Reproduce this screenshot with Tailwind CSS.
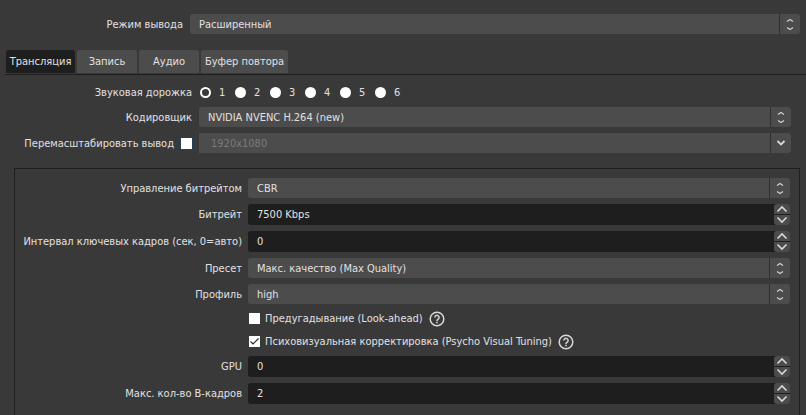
<!DOCTYPE html>
<html lang="ru">
<head>
<meta charset="utf-8">
<title>Настройки вывода</title>
<script src="https://cdn.jsdelivr.net/npm/@tailwindcss/browser@4"></script>
</head>
<body class="min-h-screen overflow-hidden bg-[#3a393a] font-['DejaVu_Sans_Condensed','DejaVu_Sans',sans-serif] text-[11px] leading-4 text-[#e1e0e1]">
<svg class="hidden" aria-hidden="true">
  <symbol id="pair" viewBox="0 0 20 20"><path d="M7 7.500 10 5.500 13 7.500M7 13.500 10 15.500 13 13.500" fill="none" stroke="#d0d0d0" stroke-width="1.200"/></symbol>
  <symbol id="down" viewBox="0 0 20 20"><path d="M6.500 8 10 11.500 13.500 8" fill="none" stroke="#d8d8d8" stroke-width="1.800"/></symbol>
  <symbol id="spin-up" viewBox="0 0 16 10"><path d="M3.500 7.500 8 3 12.500 7.500" fill="none" stroke="#d8d8d8" stroke-width="1.600"/></symbol>
  <symbol id="spin-down" viewBox="0 0 16 10"><path d="M3.500 2.500 8 7 12.500 2.500" fill="none" stroke="#d8d8d8" stroke-width="1.600"/></symbol>
  <symbol id="help" viewBox="0 0 16 16"><circle cx="8" cy="8" r="6.800" fill="none" stroke="#d8d8d8" stroke-width="1.500"/><path d="M5.900 6.500a2.100 2.100 0 1 1 3.300 1.700Q8 8.900 8 9.900" fill="none" stroke="#d8d8d8" stroke-width="1.500"/><path d="M7.200 10.800h1.600v1.500H7.200z" fill="#d8d8d8"/></symbol>
</svg>
<main class="pt-[14px]">
  <div class="grid grid-cols-[183px_1fr] items-center gap-x-[7px] pr-[6px]">
    <label for="mode" class="pt-px text-right">Режим вывода</label>
    <div class="relative">
      <select id="mode" class="block h-5 w-full appearance-none rounded-[3px] bg-[#4c4c4c] pt-px pl-[9px]"><option>Расширенный</option></select>
      <svg class="pointer-events-none absolute top-0 right-0 h-5 w-[21px] border-l border-[#2f2f2f]"><use href="#pair"/></svg>
    </div>
  </div>

  <nav class="mt-4 ml-[5px] flex gap-[2px] border-b border-[#1f1e1f] pb-px pl-px" role="tablist">
    <button role="tab" aria-selected="true" class="h-[23px] w-[69px] rounded-t-[3px] bg-[#1f1e1f] pt-px whitespace-nowrap">Трансляция</button>
    <button role="tab" class="h-[23px] w-[60px] rounded-t-[3px] bg-[#4c4c4c] pt-px">Запись</button>
    <button role="tab" class="h-[23px] w-[60px] rounded-t-[3px] bg-[#4c4c4c] pt-px">Аудио</button>
    <button role="tab" class="h-[23px] w-[87px] rounded-t-[3px] bg-[#4c4c4c] pt-px whitespace-nowrap">Буфер повтора</button>
  </nav>

  <div class="mt-[9px] grid grid-cols-[192px_1fr] items-center gap-x-[7px] gap-y-[6px] pr-[15px]">
    <span id="track" class="pt-px text-right">Звуковая дорожка</span>
    <div class="flex pl-px" role="radiogroup" aria-labelledby="track">
      <label class="flex w-[35px] items-center gap-2"><input type="radio" name="track" checked class="size-[11px] appearance-none rounded-full bg-white checked:border-2 checked:border-white checked:bg-[#3a393a]"><span class="pt-px">1</span></label>
      <label class="flex w-[35px] items-center gap-2"><input type="radio" name="track" class="size-[11px] appearance-none rounded-full bg-white checked:border-2 checked:border-white checked:bg-[#3a393a]"><span class="pt-px">2</span></label>
      <label class="flex w-[35px] items-center gap-2"><input type="radio" name="track" class="size-[11px] appearance-none rounded-full bg-white checked:border-2 checked:border-white checked:bg-[#3a393a]"><span class="pt-px">3</span></label>
      <label class="flex w-[35px] items-center gap-2"><input type="radio" name="track" class="size-[11px] appearance-none rounded-full bg-white checked:border-2 checked:border-white checked:bg-[#3a393a]"><span class="pt-px">4</span></label>
      <label class="flex w-[35px] items-center gap-2"><input type="radio" name="track" class="size-[11px] appearance-none rounded-full bg-white checked:border-2 checked:border-white checked:bg-[#3a393a]"><span class="pt-px">5</span></label>
      <label class="flex w-[35px] items-center gap-2"><input type="radio" name="track" class="size-[11px] appearance-none rounded-full bg-white checked:border-2 checked:border-white checked:bg-[#3a393a]"><span class="pt-px">6</span></label>
    </div>

    <label for="encoder" class="pt-px text-right">Кодировщик</label>
    <div class="relative">
      <select id="encoder" class="block h-5 w-full appearance-none rounded-[3px] bg-[#4c4c4c] pt-px pl-[9px]"><option>NVIDIA NVENC H.264 (new)</option></select>
      <svg class="pointer-events-none absolute top-0 right-0 h-5 w-[21px] border-l border-[#2f2f2f]"><use href="#pair"/></svg>
    </div>

    <label class="flex items-center justify-end gap-[7px] whitespace-nowrap"><span class="pt-px">Перемасштабировать вывод</span><input type="checkbox" class="size-[11px] appearance-none bg-white outline outline-[#24415c]"></label>
    <div class="relative">
      <input type="text" aria-label="Разрешение" value="1920x1080" disabled class="block h-5 w-full rounded-r-[3px] bg-[#4c4c4c] pt-px pl-3 text-[#7b7a7b]">
      <svg class="pointer-events-none absolute top-0 right-0 h-5 w-[21px] border-l border-[#2f2f2f]"><use href="#down"/></svg>
    </div>
  </div>

  <section class="mt-[15px] mr-[6px] ml-[14px] border border-b-0 border-[#1f1e1f] pt-[9px] pr-[9px] pb-4">
    <div class="grid grid-cols-[227px_1fr] items-center gap-x-[6px] gap-y-[6px]">
      <label for="rate" class="pt-px text-right">Управление битрейтом</label>
      <div class="relative">
        <select id="rate" class="block h-5 w-full appearance-none rounded-[3px] bg-[#4c4c4c] pt-px pl-[9px]"><option>CBR</option></select>
        <svg class="pointer-events-none absolute top-0 right-0 h-5 w-[21px] border-l border-[#2f2f2f]"><use href="#pair"/></svg>
      </div>

      <label for="bitrate" class="pt-px text-right">Битрейт</label>
      <div class="flex h-[21px] rounded-[3px] bg-[#1f1e1f]">
        <input id="bitrate" type="text" value="7500 Kbps" class="min-w-0 flex-1 pt-px pl-[9px]">
        <div class="flex w-4 flex-col gap-px">
          <button aria-label="Больше" class="h-[10px] rounded-t-[3px] bg-[#4c4c4c]"><svg class="block h-[10px] w-4"><use href="#spin-up"/></svg></button>
          <button aria-label="Меньше" class="h-[10px] rounded-b-[3px] bg-[#4c4c4c]"><svg class="block h-[10px] w-4"><use href="#spin-down"/></svg></button>
        </div>
      </div>

      <label for="keyint" class="pt-px text-right whitespace-nowrap">Интервал ключевых кадров (сек, 0=авто)</label>
      <div class="flex h-[21px] rounded-[3px] bg-[#1f1e1f]">
        <input id="keyint" type="text" value="0" class="min-w-0 flex-1 pt-px pl-[9px]">
        <div class="flex w-4 flex-col gap-px">
          <button aria-label="Больше" class="h-[10px] rounded-t-[3px] bg-[#4c4c4c]"><svg class="block h-[10px] w-4"><use href="#spin-up"/></svg></button>
          <button aria-label="Меньше" class="h-[10px] rounded-b-[3px] bg-[#4c4c4c]"><svg class="block h-[10px] w-4"><use href="#spin-down"/></svg></button>
        </div>
      </div>

      <label for="preset" class="pt-px text-right">Пресет</label>
      <div class="relative">
        <select id="preset" class="block h-5 w-full appearance-none rounded-[3px] bg-[#4c4c4c] pt-px pl-[9px]"><option>Макс. качество (Max Quality)</option></select>
        <svg class="pointer-events-none absolute top-0 right-0 h-5 w-[21px] border-l border-[#2f2f2f]"><use href="#pair"/></svg>
      </div>

      <label for="profile" class="pt-px text-right">Профиль</label>
      <div class="relative">
        <select id="profile" class="block h-5 w-full appearance-none rounded-[3px] bg-[#4c4c4c] pt-px pl-[9px]"><option>high</option></select>
        <svg class="pointer-events-none absolute top-0 right-0 h-5 w-[21px] border-l border-[#2f2f2f]"><use href="#pair"/></svg>
      </div>

      <div class="col-start-2 flex h-[17px] items-center gap-[6px] pl-px">
        <label class="flex items-center gap-[5px]"><input type="checkbox" class="size-[11px] appearance-none bg-white"><span class="pt-px">Предугадывание (Look-ahead)</span></label>
        <svg class="size-4" role="img" aria-label="Справка"><use href="#help"/></svg>
      </div>
      <div class="col-start-2 flex h-[17px] items-center gap-[6px] pl-px">
        <label class="flex items-center gap-[5px]"><span class="relative flex"><input type="checkbox" checked class="size-[11px] appearance-none bg-white"><svg class="pointer-events-none absolute inset-0" viewBox="0 0 11 11"><path d="M1.500 5.500 4 8 9.500 2.500" fill="none" stroke="#2b2b2b" stroke-width="1.200"/></svg></span><span class="pt-px">Психовизуальная корректировка (Psycho Visual Tuning)</span></label>
        <svg class="size-4" role="img" aria-label="Справка"><use href="#help"/></svg>
      </div>

      <label for="gpu" class="pt-px text-right">GPU</label>
      <div class="flex h-[21px] rounded-[3px] bg-[#1f1e1f]">
        <input id="gpu" type="text" value="0" class="min-w-0 flex-1 pt-px pl-[9px]">
        <div class="flex w-4 flex-col gap-px">
          <button aria-label="Больше" class="h-[10px] rounded-t-[3px] bg-[#4c4c4c]"><svg class="block h-[10px] w-4"><use href="#spin-up"/></svg></button>
          <button aria-label="Меньше" class="h-[10px] rounded-b-[3px] bg-[#4c4c4c]"><svg class="block h-[10px] w-4"><use href="#spin-down"/></svg></button>
        </div>
      </div>

      <label for="bframes" class="pt-px text-right">Макс. кол-во B-кадров</label>
      <div class="flex h-[21px] rounded-[3px] bg-[#1f1e1f]">
        <input id="bframes" type="text" value="2" class="min-w-0 flex-1 pt-px pl-[9px]">
        <div class="flex w-4 flex-col gap-px">
          <button aria-label="Больше" class="h-[10px] rounded-t-[3px] bg-[#4c4c4c]"><svg class="block h-[10px] w-4"><use href="#spin-up"/></svg></button>
          <button aria-label="Меньше" class="h-[10px] rounded-b-[3px] bg-[#4c4c4c]"><svg class="block h-[10px] w-4"><use href="#spin-down"/></svg></button>
        </div>
      </div>
    </div>
  </section>
</main>
</body>
</html>
